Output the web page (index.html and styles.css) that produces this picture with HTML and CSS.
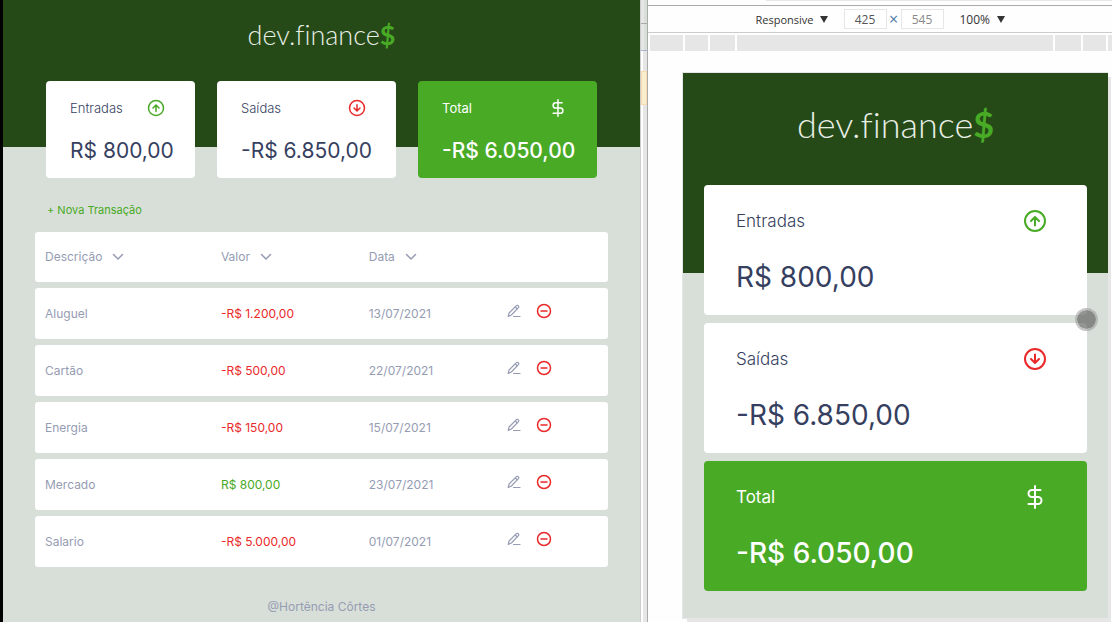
FILE: index.html
```html
<!DOCTYPE html>
<html lang="pt-BR">
<head>
<meta charset="utf-8">
<meta name="viewport" content="width=device-width, initial-scale=1">
<title>dev.finance$</title>
<link rel="stylesheet" href="styles.css">
</head>
<body>
<svg class="defs" aria-hidden="true">
  <symbol id="up" viewBox="0 0 40 40"><circle cx="20" cy="20" r="10"/><path d="M20 24.500v-8M16 20l4-4 4 4"/></symbol>
  <symbol id="down" viewBox="0 0 40 40"><circle cx="20" cy="20" r="10"/><path d="M20 15.500v8M16 20l4 4 4-4"/></symbol>
  <symbol id="dollar" viewBox="0 0 40 40"><path d="M20 9v22M25.500 13h-8.500a3.500 3.500 0 0 0 0 7h6a3.500 3.500 0 0 1 0 7H13.500"/></symbol>
  <symbol id="chevron" viewBox="0 0 12 8"><path d="M1.500 1.500L6 6l4.500-4.500"/></symbol>
  <symbol id="pen" viewBox="0 0 14 14"><path d="M1.200 12.400l.9-3.400L9.400 1.700a1.300 1.300 0 0 1 2 .2c.5.6.5 1.200 0 1.800L4.400 11l-3.200 1.400zM8.300 3l2 2M6.500 12.500H13"/></symbol>
  <symbol id="minus" viewBox="0 0 16 16"><circle cx="8" cy="8" r="6.500"/><path d="M5 8h6"/></symbol>
</svg>

<div class="workspace">
  <div class="desktop">
    <header class="hero"><h1 class="logo">dev.finance<span class="logo-sign">$</span></h1></header>
    <main class="content">
      <section class="cards">
        <article class="card">
          <h2 class="card-label">Entradas</h2><svg class="card-icon up"><use href="#up"/></svg>
          <p class="card-value">R$ 800,00</p>
        </article>
        <article class="card">
          <h2 class="card-label">Saídas</h2><svg class="card-icon down"><use href="#down"/></svg>
          <p class="card-value">-R$ 6.850,00</p>
        </article>
        <article class="card total">
          <h2 class="card-label">Total</h2><svg class="card-icon"><use href="#dollar"/></svg>
          <p class="card-value">-R$ 6.050,00</p>
        </article>
      </section>
      <a class="new" href="#">+ Nova Transação</a>
      <table class="transactions">
        <colgroup><col class="col-name"><col class="col-value"><col class="col-date"><col></colgroup>
        <thead>
          <tr>
            <th><button class="sort" type="button">Descrição <svg class="chevron"><use href="#chevron"/></svg></button></th>
            <th><button class="sort" type="button">Valor <svg class="chevron"><use href="#chevron"/></svg></button></th>
            <th><button class="sort" type="button">Data <svg class="chevron"><use href="#chevron"/></svg></button></th>
            <th></th>
          </tr>
        </thead>
        <tbody>
          <tr>
            <td>Aluguel</td><td class="expense">-R$ 1.200,00</td><td>13/07/2021</td>
            <td><div class="actions"><button type="button" aria-label="Editar Aluguel"><svg class="pen"><use href="#pen"/></svg></button><button type="button" aria-label="Remover Aluguel"><svg class="minus"><use href="#minus"/></svg></button></div></td>
          </tr>
          <tr>
            <td>Cartão</td><td class="expense">-R$ 500,00</td><td>22/07/2021</td>
            <td><div class="actions"><button type="button" aria-label="Editar Cartão"><svg class="pen"><use href="#pen"/></svg></button><button type="button" aria-label="Remover Cartão"><svg class="minus"><use href="#minus"/></svg></button></div></td>
          </tr>
          <tr>
            <td>Energia</td><td class="expense">-R$ 150,00</td><td>15/07/2021</td>
            <td><div class="actions"><button type="button" aria-label="Editar Energia"><svg class="pen"><use href="#pen"/></svg></button><button type="button" aria-label="Remover Energia"><svg class="minus"><use href="#minus"/></svg></button></div></td>
          </tr>
          <tr>
            <td>Mercado</td><td class="income">R$ 800,00</td><td>23/07/2021</td>
            <td><div class="actions"><button type="button" aria-label="Editar Mercado"><svg class="pen"><use href="#pen"/></svg></button><button type="button" aria-label="Remover Mercado"><svg class="minus"><use href="#minus"/></svg></button></div></td>
          </tr>
          <tr>
            <td>Salario</td><td class="expense">-R$ 5.000,00</td><td>01/07/2021</td>
            <td><div class="actions"><button type="button" aria-label="Editar Salario"><svg class="pen"><use href="#pen"/></svg></button><button type="button" aria-label="Remover Salario"><svg class="minus"><use href="#minus"/></svg></button></div></td>
          </tr>
        </tbody>
      </table>
    </main>
    <footer class="footer">@Hortência Côrtes</footer>
  </div>

  <div class="divider"><span class="divider-tabs"></span><span class="divider-mark"></span></div>

  <div class="device">
    <div class="tab-edge"></div>
    <div class="toolbar">
      <label class="picker"><select class="mode" aria-label="Device"><option>Responsive</option></select><svg class="caret" viewBox="0 0 8 7"><path d="M0 0h8L4 7z"/></svg></label>
      <div class="size">
        <input class="dimension" type="text" value="425" aria-label="Width">
        <span class="times">×</span>
        <input class="dimension auto" type="text" value="545" aria-label="Height">
      </div>
      <label class="picker"><select class="zoom" aria-label="Zoom"><option>100%</option></select><svg class="caret" viewBox="0 0 8 7"><path d="M0 0h8L4 7z"/></svg></label>
    </div>
    <div class="ruler"><span></span><span></span><span></span><span></span><span></span><span></span><span></span></div>
    <div class="stage">
      <div class="phone">
        <header class="hero"><h1 class="logo">dev.finance<span class="logo-sign">$</span></h1></header>
        <section class="cards">
          <article class="card">
            <h2 class="card-label">Entradas</h2><svg class="card-icon up"><use href="#up"/></svg>
            <p class="card-value">R$ 800,00</p>
            <span class="touch"></span>
          </article>
          <article class="card">
            <h2 class="card-label">Saídas</h2><svg class="card-icon down"><use href="#down"/></svg>
            <p class="card-value">-R$ 6.850,00</p>
          </article>
          <article class="card total">
            <h2 class="card-label">Total</h2><svg class="card-icon"><use href="#dollar"/></svg>
            <p class="card-value">-R$ 6.050,00</p>
          </article>
        </section>
      </div>
    </div>
  </div>
</div>
</body>
</html>
```
FILE: styles.css
```css
:root {
  --forest: #254a18;
  --green: #49aa26;
  --red: #e92929;
  --page: #d8dfd8;
  --ink: #363f5f;
  --muted: #969cb3;
  --line: #e6e6e6;
}

* { box-sizing: border-box; }

body, h1, h2, p { margin: 0; }

body {
  background: #fefefe;
  font-family: Inter, "Open Sans", sans-serif;
  color: var(--ink);
}

button {
  padding: 0;
  border: 0;
  background: none;
  font: inherit;
  color: inherit;
  cursor: pointer;
}

svg {
  display: block;
  fill: none;
  stroke: currentColor;
  stroke-linecap: round;
  stroke-linejoin: round;
}

.defs { position: absolute; width: 0; height: 0; }

.workspace {
  display: grid;
  grid-template-columns: minmax(0, 640fr) 8px minmax(0, 464fr);
  min-height: 100vh;
}

/* Shared by both sizes of the app */
.hero {
  display: flex;
  justify-content: center;
  background: var(--forest);
}

.logo {
  font-family: Lato, sans-serif;
  font-weight: 300;
  font-variant-ligatures: none;
  color: #e9eee6;
}

.logo-sign { font-weight: 700; color: var(--green); }

.card {
  position: relative;
  display: grid;
  grid-template-columns: 1fr auto;
  align-items: center;
  border-radius: 4px;
  background: #fff;
}

.card-label { font-weight: 300; }
.card-value { grid-column: 1 / -1; font-weight: 400; white-space: nowrap; }
.card-icon { stroke-width: 2; }
.up, .income { color: var(--green); }
.down, .expense, .minus { color: var(--red); }
.total { background: var(--green); color: #fff; }
.total .card-label { font-weight: 400; }
.total .card-value { font-weight: 500; }

/* Desktop size */
.desktop {
  border-left: 3px solid #000;
  background: var(--page);
}

.desktop .hero { height: 147px; padding-top: 19px; }
.desktop .logo { font-size: 27px; line-height: 32px; }
.content { margin-top: -66px; padding: 0 32px; }

.desktop .cards {
  display: grid;
  grid-template-columns: 149fr 179fr 179fr;
  gap: 22px;
  padding: 0 11px;
}

.desktop .card { padding: 12px 24px 11px; row-gap: 12px; }
.desktop .card-label { font-size: 13px; line-height: 18px; }
.desktop .card-icon { width: 30px; height: 30px; }
.desktop .card-value { font-size: 21px; line-height: 32px; }

.new {
  display: inline-block;
  margin: 24px 0 8px 12px;
  font-size: 11px;
  line-height: 16px;
  color: var(--green);
  text-decoration: none;
}

.transactions {
  width: 100%;
  table-layout: fixed;
  border-spacing: 0 6px;
  font-size: 12px;
  line-height: 18px;
  color: var(--muted);
}

.transactions thead tr { height: 50px; }
.transactions tbody tr { height: 51px; }
.col-name { width: 30.7%; }
.col-value { width: 25.8%; }
.col-date { width: 24.1%; }

.transactions th, .transactions td {
  padding: 0 10px;
  background: #fff;
  font-weight: 400;
  text-align: left;
}

.transactions tr > :first-child { border-radius: 3px 0 0 3px; }
.transactions tr > :last-child { border-radius: 0 3px 3px 0; }
.transactions .income { color: var(--green); }
.transactions .expense { color: var(--red); }
.sort { display: flex; align-items: center; gap: 10px; }
.chevron { width: 12px; height: 8px; stroke-width: 1.5; }
.actions { display: flex; align-items: center; gap: 15px; padding-bottom: 6px; }
.pen { width: 14px; height: 14px; stroke-width: 1.2; }
.minus { width: 16px; height: 16px; stroke-width: 1.5; }

.footer {
  padding: 25px 0 6px;
  font-size: 12px;
  line-height: 18px;
  text-align: center;
  color: var(--muted);
}

/* Bar between the two panes */
.divider {
  display: flex;
  flex-direction: column;
  gap: 20px;
  border-left: 1px solid #ccc;
  border-right: 1px solid #aaa;
  background: linear-gradient(90deg, #fff 2px, var(--line) 2px);
}

.divider-tabs {
  height: 51px;
  border-bottom: 1px solid #a9b8d0;
  background: linear-gradient(#aaa, #aaa) 0 23px / 100% 1px no-repeat, linear-gradient(90deg, var(--line) 3px, var(--page) 3px);
}

.divider-mark { height: 34px; border: 1px solid #fbdcae; background: #faedd0; }

/* Device preview */
.device { display: flex; flex-direction: column; overflow: hidden; }
.tab-edge { height: 5px; margin-left: 118px; border-top: 1px solid var(--line); }

.toolbar {
  display: flex;
  align-items: center;
  justify-content: center;
  gap: 16px;
  height: 28px;
  border-top: 1px solid #aaa;
  border-bottom: 1px solid #ccc;
  font-family: "Open Sans", sans-serif;
  font-size: 12px;
  color: #333;
}

.picker { display: flex; align-items: center; gap: 6px; }

.picker select {
  appearance: none;
  padding: 0;
  border: 0;
  background: none;
  font: inherit;
  color: inherit;
}

.picker .mode { font-size: 11px; }

.caret { width: 8px; height: 7px; fill: #333; stroke: none; }
.size { display: flex; align-items: center; gap: 2px; }

.dimension {
  width: 43px;
  height: 20px;
  padding: 0;
  border: 1px solid var(--line);
  background: #fff;
  font: inherit;
  color: #555;
  text-align: center;
}

.auto { color: #888; }
.times { width: 10px; font-size: 16px; line-height: 20px; color: #4b7ba8; text-align: center; }

.ruler {
  display: grid;
  grid-template-columns: 33px 23px 25px 1fr 26px 23px 4px;
  gap: 2px;
  height: 16px;
  margin: 2px 0 0 2px;
}

.ruler span { background: var(--line); }

.stage { flex: 1; padding: 21px 4px 4px 34px; }

.phone {
  min-height: 100%;
  padding-bottom: 27px;
  border: 1px solid var(--line);
  border-right: 0;
  background: var(--page);
  box-shadow: 4px 4px 0 -1px var(--line);
}

.phone .hero { height: 200px; padding-top: 29px; }
.phone .logo { font-size: 36px; line-height: 44px; }
.phone .cards { display: grid; gap: 8px; margin-top: -88px; padding: 0 21px; }
.phone .card { padding: 16px 32px; row-gap: 14px; }
.phone .card-label { font-size: 17px; line-height: 24px; }
.phone .card-icon { width: 40px; height: 40px; }
.phone .card-value { font-size: 28px; line-height: 44px; }

.touch {
  position: absolute;
  right: -11px;
  bottom: -16px;
  z-index: 1;
  width: 23px;
  height: 23px;
  border: 2px solid rgba(160, 160, 160, .6);
  border-radius: 50%;
  background: rgba(90, 90, 90, .65);
  background-clip: padding-box;
}
```
